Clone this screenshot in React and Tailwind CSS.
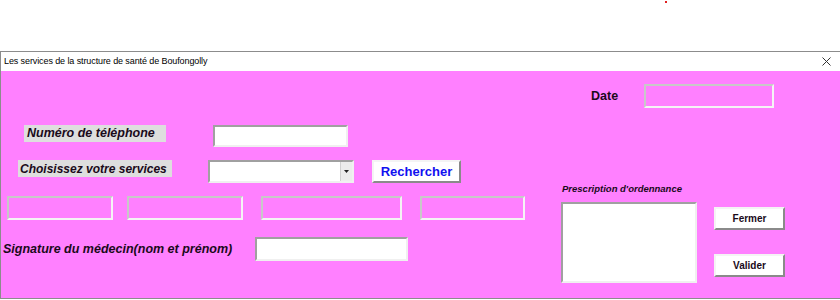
export default function App() {
  const sunken =
    "border-2 border-t-[#a0a0a0] border-l-[#a0a0a0] border-b-[#f0f0f0] border-r-[#f0f0f0] bg-white";
  const flat =
    "border-2 border-t-[#c8c8c8] border-l-[#c8c8c8] border-b-[#f4f4f4] border-r-[#f4f4f4]";
  const raised =
    "border-2 border-t-[#f4f4f4] border-l-[#f4f4f4] border-b-[#8a8a8a] border-r-[#8a8a8a] bg-white flex items-center justify-center font-bold";
  const label = "font-bold italic text-[#1a0a1a] leading-none whitespace-nowrap";

  return (
    <div className="w-[840px] h-[300px] bg-white relative overflow-hidden" style={{ fontFamily: '"Liberation Sans", Arial, sans-serif' }}>
      <div className="absolute left-[665px] top-[1px] w-[2px] h-[2px] bg-[#e02020]" />
      <div className="h-[51px]" />
      {/* userform */}
      <div className="border-t border-l border-b border-[#8c8c8c] h-[248px] flex flex-col">
        <div className="h-[19px] bg-white flex items-center justify-between pl-[3px] pr-[9px]">
          <span className="text-[9px] text-black tracking-[-0.1px] whitespace-nowrap">
            Les services de la structure de santé de Boufongolly
          </span>
          <svg width="9" height="9" viewBox="0 0 9 9">
            <path d="M0.5 0.5 L8.5 8.5 M8.5 0.5 L0.5 8.5" stroke="#333" strokeWidth="1" />
          </svg>
        </div>
        <div className="flex-1 bg-[#ff80ff] flex">
          {/* left column */}
          <div className="w-[539px] flex flex-col pt-[54px]">
            <div className="flex items-start h-[22px]">
              <div className={`ml-[23px] w-[142px] h-[17px] bg-[#dedede] flex items-center pl-[3px] text-[12.5px] ${label}`}>
                Numéro de téléphone
              </div>
              <div className={`ml-[47px] w-[135px] h-[22px] ${sunken}`} />
            </div>
            <div className="flex items-start h-[23px] mt-[13px]">
              <div className={`ml-[17px] w-[154px] h-[17px] bg-[#dedede] flex items-center pl-[2px] text-[12px] ${label}`}>
                Choisissez votre services
              </div>
              <div className={`ml-[36px] w-[146px] h-[23px] ${sunken} flex justify-end`}>
                <div className="w-[12px] h-full bg-[#ececec] border-l border-[#d0d0d0] flex items-center justify-center">
                  <svg width="5" height="3" viewBox="0 0 5 3">
                    <path d="M0 0 H5 L2.5 3 Z" fill="#222" />
                  </svg>
                </div>
              </div>
              <div className={`ml-[18px] w-[89px] h-[23px] ${raised} text-[13px] text-[#1010f0]`}>
                Rechercher
              </div>
            </div>
            <div className="flex h-[24px] mt-[13px]">
              <div className={`ml-[6px] w-[106px] h-[24px] ${flat}`} />
              <div className={`ml-[14px] w-[116px] h-[24px] ${flat}`} />
              <div className={`ml-[18px] w-[141px] h-[24px] ${flat}`} />
              <div className={`ml-[18px] w-[105px] h-[24px] ${flat}`} />
            </div>
            <div className="flex items-center h-[24px] mt-[17px]">
              <div className={`ml-[2px] w-[252px] text-[12.5px] ${label}`}>Signature du médecin(nom et prénom)</div>
              <div className={`w-[153px] h-[24px] ${sunken}`} />
            </div>
          </div>
          {/* right column */}
          <div className="flex-1 flex flex-col pt-[13px]">
            <div className="flex items-center h-[24px]">
              <span className="ml-[51px] w-[53px] font-bold text-[12.5px] text-[#1a0a1a]">Date</span>
              <div className={`w-[130px] h-[24px] ${flat}`} />
            </div>
            <div className={`mt-[76px] ml-[22px] text-[9.5px] h-[12px] ${label}`}>
              Prescription d'ordennance
            </div>
            <div className="flex mt-[6px]">
              <div className={`ml-[21px] w-[136px] h-[81px] ${sunken}`} />
              <div className="ml-[17px] flex flex-col pt-[5px] gap-[24px]">
                <div className={`w-[71px] h-[23px] ${raised} text-[10px] text-[#1a0a1a]`}>Fermer</div>
                <div className={`w-[71px] h-[23px] ${raised} text-[10px] text-[#1a0a1a]`}>Valider</div>
              </div>
            </div>
          </div>
        </div>
      </div>
    </div>
  );
}
